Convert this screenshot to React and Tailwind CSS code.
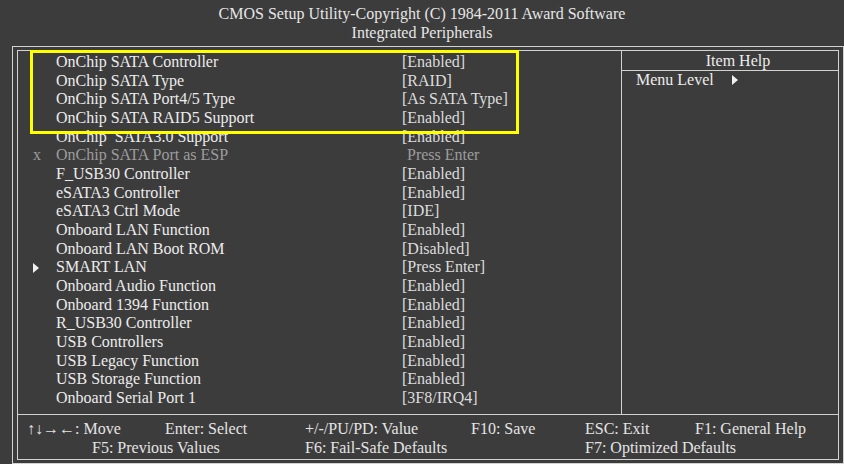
const rows = [
  { label: 'OnChip SATA Controller', value: '[Enabled]' },
  { label: 'OnChip SATA Type', value: '[RAID]' },
  { label: 'OnChip SATA Port4/5 Type', value: '[As SATA Type]' },
  { label: 'OnChip SATA RAID5 Support', value: '[Enabled]' },
  { label: 'OnChip  SATA3.0 Support', value: '[Enabled]' },
  { label: 'OnChip SATA Port as ESP', value: 'Press Enter', mark: 'x', disabled: true },
  { label: 'F_USB30 Controller', value: '[Enabled]' },
  { label: 'eSATA3 Controller', value: '[Enabled]' },
  { label: 'eSATA3 Ctrl Mode', value: '[IDE]' },
  { label: 'Onboard LAN Function', value: '[Enabled]' },
  { label: 'Onboard LAN Boot ROM', value: '[Disabled]' },
  { label: 'SMART LAN', value: '[Press Enter]', mark: 'arrow' },
  { label: 'Onboard Audio Function', value: '[Enabled]' },
  { label: 'Onboard 1394 Function', value: '[Enabled]' },
  { label: 'R_USB30 Controller', value: '[Enabled]' },
  { label: 'USB Controllers', value: '[Enabled]' },
  { label: 'USB Legacy Function', value: '[Enabled]' },
  { label: 'USB Storage Function', value: '[Enabled]' },
  { label: 'Onboard Serial Port 1', value: '[3F8/IRQ4]' },
]

function Tri() {
  return (
    <svg width="6" height="10" viewBox="0 0 6 10" className="inline-block">
      <path d="M0 0 L6 5 L0 10 Z" fill="#f0f0f0" />
    </svg>
  )
}

export default function App() {
  return (
    <div
      className="relative w-[844px] h-[464px] bg-[#3c3c3c] text-[#ececec] text-[16px] overflow-hidden"
      style={{ fontFamily: '"Liberation Serif", "Times New Roman", serif' }}
    >
      {/* title */}
      <div className="h-[46px] pt-[4px] text-center leading-[19px] text-[#e6e6e6]">
        <div>CMOS Setup Utility-Copyright (C) 1984-2011 Award Software</div>
        <div>Integrated Peripherals</div>
      </div>

      <div className="ml-[12px] w-[832px] h-[418px] border border-[#d2d2d2] px-[4px] py-[3px]">
        <div className="h-full border border-[#d2d2d2] flex flex-col">
          <div className="flex h-[364px] border-b border-[#d2d2d2]">
            {/* settings list */}
            <div className="w-[604px] border-r border-[#d2d2d2] pt-[2px]">
              {rows.map((r, i) => (
                <div
                  key={i}
                  className={`grid grid-cols-[38px_346px_1fr] h-[18.67px] leading-[18.67px] whitespace-pre ${
                    r.disabled ? 'text-[#9c9c9c]' : ''
                  }`}
                >
                  <div className="pl-[15px] flex items-center">
                    {r.mark === 'x' && <span>x</span>}
                    {r.mark === 'arrow' && <Tri />}
                  </div>
                  <div>{r.label}</div>
                  <div className={r.disabled ? 'pl-[5px]' : 'text-[#dcdcdc]'}>{r.value}</div>
                </div>
              ))}
            </div>

            {/* help panel */}
            <div className="flex-1">
              <div className="h-[20px] leading-[19px] border-b border-[#d2d2d2] text-center pl-[16px]">Item Help</div>
              <div className="pl-[14px] leading-[18px] flex items-center">
                <span>Menu Level</span>
                <span className="ml-[18px] flex items-center"><Tri /></span>
              </div>
            </div>
          </div>

          {/* key legend */}
          <div className="pt-[4px] leading-[19px] text-[#e4e4e4]">
            <div className="flex pl-[9px]">
              <span className="w-[138px]">↑↓→←: Move</span>
              <span className="w-[140px]">Enter: Select</span>
              <span className="w-[166px]">+/-/PU/PD: Value</span>
              <span className="w-[114px]">F10: Save</span>
              <span className="w-[110px]">ESC: Exit</span>
              <span>F1: General Help</span>
            </div>
            <div className="flex pl-[74px]">
              <span className="w-[213px]">F5: Previous Values</span>
              <span className="w-[280px]">F6: Fail-Safe Defaults</span>
              <span>F7: Optimized Defaults</span>
            </div>
          </div>
        </div>
      </div>

      {/* highlight annotation */}
      <div className="absolute left-[30px] top-[50px] w-[489px] h-[84px] border-[3px] border-[#ffff00]" />
    </div>
  )
}
